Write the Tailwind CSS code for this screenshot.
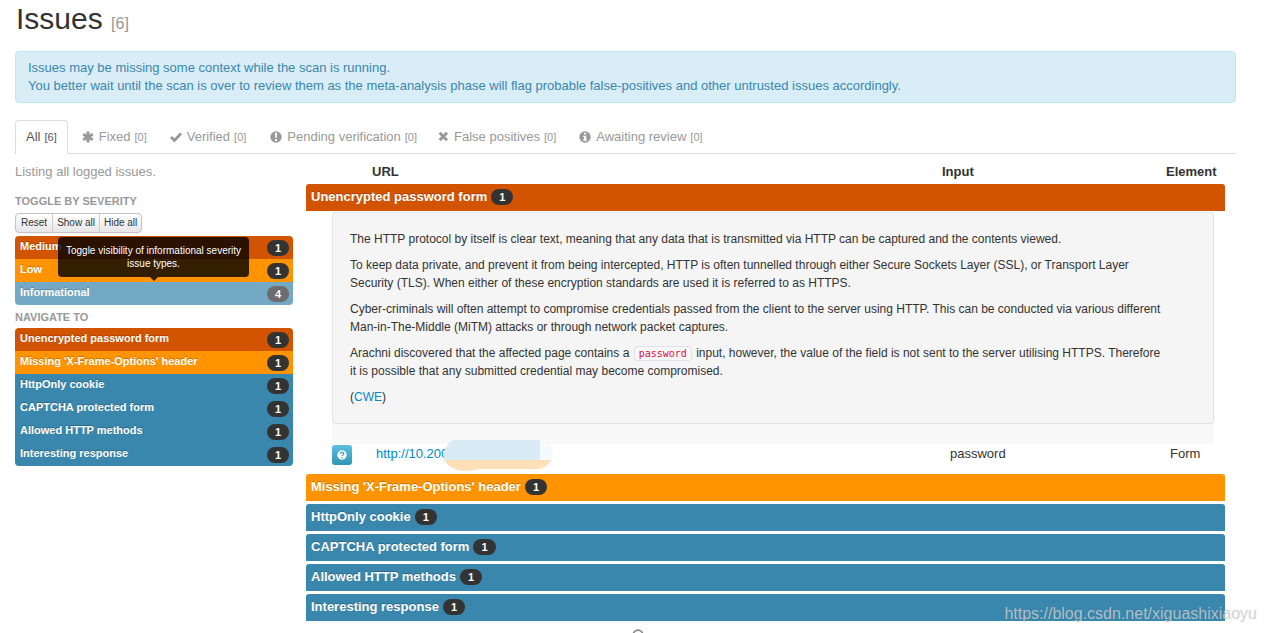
<!DOCTYPE html>
<html lang="en">
<head>
<meta charset="utf-8">
<title>Issues</title>
<script src="https://cdn.jsdelivr.net/npm/@tailwindcss/browser@4"></script>
</head>
<body class="relative h-screen overflow-hidden bg-white font-['Liberation_Sans',Arial,sans-serif] text-[13px] leading-[18px] text-[#333333]">
<main class="pl-[15px] pr-[29px]">
  <h1 class="pl-px pt-px text-[30px] leading-[36px] text-[#333333]">Issues <small class="text-base text-[#999999]">[6]</small></h1>

  <div role="alert" class="mt-[14px] rounded border border-[#bce8f1] bg-[#d9edf7] px-3 py-[7px] text-[#3a87ad]">
    Issues may be missing some context while the scan is running.<br>
    You better wait until the scan is over to review them as the meta-analysis phase will flag probable false-positives and other untrusted issues accordingly.
  </div>

  <nav class="mt-[17px] flex h-[34px] border-b border-[#dddddd] text-[#999999]">
    <a href="#all" class="-mb-px flex items-center gap-1 rounded-t border border-b-0 border-[#dddddd] bg-white px-[10px] pb-px text-[#555555]">All <small class="text-[11px]">[6]</small></a>
    <a href="#fixed" class="ml-[14px] flex items-center gap-1"><svg class="mr-px size-3" viewBox="0 0 12 12" stroke="currentColor" stroke-width="3"><path d="M6 0.5v11M1.2 3.2l9.6 5.6M1.2 8.8l9.6-5.6"/></svg>Fixed <small class="text-[11px]">[0]</small></a>
    <a href="#verified" class="ml-[23px] flex items-center gap-1"><svg class="mr-px size-3" viewBox="0 0 12 12" fill="none" stroke="currentColor" stroke-width="2.8"><path d="M1 6l3.4 3.4L11 2.4"/></svg>Verified <small class="text-[11px]">[0]</small></a>
    <a href="#pending" class="ml-[24px] flex items-center gap-1"><svg class="mr-px size-3" viewBox="0 0 12 12"><circle cx="6" cy="6" r="5.7" fill="currentColor"/><path d="M4.9 1.8h2.2l-.3 5h-1.6zM5 7.9h2v2H5z" fill="#fff"/></svg>Pending verification <small class="text-[11px]">[0]</small></a>
    <a href="#false" class="ml-[21px] flex items-center gap-1"><svg class="mr-px size-[11px]" viewBox="0 0 11 11" stroke="currentColor" stroke-width="3"><path d="M1.6 1.8l7.4 7.4M9 1.8l-7.4 7.4"/></svg>False positives <small class="text-[11px]">[0]</small></a>
    <a href="#review" class="ml-[23px] flex items-center gap-1"><svg class="mr-px size-3" viewBox="0 0 12 12"><circle cx="6" cy="6" r="5.7" fill="currentColor"/><path d="M5 1.8h2.2v1.8H5zM4.2 4.7h3v3.6h.8v1.5H4.2V8.3H5V6.1h-.8z" fill="#fff"/></svg>Awaiting review <small class="text-[11px]">[0]</small></a>
  </nav>

  <div class="mt-[9px] flex gap-[13px]">
    <aside class="w-[278px] shrink-0">
      <p class="text-[#999999]">Listing all logged issues.</p>
      <h2 class="mt-[11px] text-[11px] leading-[18px] font-bold text-[#999999]">TOGGLE BY SEVERITY</h2>
      <div class="mt-[3px] inline-flex divide-x divide-[#cccccc] rounded border border-[#c4c4c4] bg-linear-to-b from-white to-[#e6e6e6] text-[10px] leading-[18px] shadow-xs">
        <button type="button" class="px-[5px]">Reset</button>
        <button type="button" class="px-[4px]">Show all</button>
        <button type="button" class="px-[4px]">Hide all</button>
      </div>
      <div class="relative mt-[3px]">
        <ul class="overflow-hidden rounded text-[11px] leading-[20px] font-bold text-white [text-shadow:0_-1px_0_rgb(0_0_0/0.25)]">
          <li><a href="#medium" class="flex h-[23px] justify-between bg-[#d35400] pl-[5px] pr-1">Medium <span class="mt-1 h-4 rounded-full bg-[#333333] px-2 leading-4">1</span></a></li>
          <li><a href="#low" class="flex h-[23px] justify-between bg-[#ff9400] pl-[5px] pr-1">Low <span class="mt-1 h-4 rounded-full bg-[#333333] px-2 leading-4">1</span></a></li>
          <li><a href="#informational" class="flex h-[23px] justify-between bg-[#74a9c6] pl-[5px] pr-1">Informational <span class="mt-1 h-4 rounded-full bg-[#6d6d6d] px-2 leading-4">4</span></a></li>
        </ul>
        <div role="tooltip" class="absolute left-[43px] top-px w-[191px] rounded bg-black/80 px-[7px] py-[7px] text-center text-[10px] leading-[13px] text-white">Toggle visibility of informational severity issue types.
          <span class="absolute left-1/2 top-full -ml-1 border-x-4 border-t-4 border-x-transparent border-t-black/80"></span>
        </div>
      </div>
      <h2 class="mt-[3px] text-[11px] leading-[18px] font-bold text-[#999999]">NAVIGATE TO</h2>
      <ul class="mt-[2px] overflow-hidden rounded text-[11px] leading-[20px] font-bold text-white [text-shadow:0_-1px_0_rgb(0_0_0/0.25)]">
        <li><a href="#i1" class="flex h-[23px] justify-between bg-[#d35400] pl-[5px] pr-1">Unencrypted password form <span class="mt-1 h-4 rounded-full bg-[#333333] px-2 leading-4">1</span></a></li>
        <li><a href="#i2" class="flex h-[23px] justify-between bg-[#ff9400] pl-[5px] pr-1">Missing 'X-Frame-Options' header <span class="mt-1 h-4 rounded-full bg-[#333333] px-2 leading-4">1</span></a></li>
        <li><a href="#i3" class="flex h-[23px] justify-between bg-[#3a87ad] pl-[5px] pr-1">HttpOnly cookie <span class="mt-1 h-4 rounded-full bg-[#333333] px-2 leading-4">1</span></a></li>
        <li><a href="#i4" class="flex h-[23px] justify-between bg-[#3a87ad] pl-[5px] pr-1">CAPTCHA protected form <span class="mt-1 h-4 rounded-full bg-[#333333] px-2 leading-4">1</span></a></li>
        <li><a href="#i5" class="flex h-[23px] justify-between bg-[#3a87ad] pl-[5px] pr-1">Allowed HTTP methods <span class="mt-1 h-4 rounded-full bg-[#333333] px-2 leading-4">1</span></a></li>
        <li><a href="#i6" class="flex h-[23px] justify-between bg-[#3a87ad] pl-[5px] pr-1">Interesting response <span class="mt-1 h-4 rounded-full bg-[#333333] px-2 leading-4">1</span></a></li>
      </ul>
    </aside>

    <section class="min-w-0 flex-1 pr-[11px]">
      <table class="w-full table-fixed text-left">
        <thead><tr class="h-[21px] align-top">
          <th class="p-0 pl-[66px]">URL</th><th class="w-[224px] p-0">Input</th><th class="w-[59px] p-0">Element</th>
        </tr></thead>
      </table>
      <h3 id="i1" class="flex h-[27px] gap-1 rounded-t-[3px] bg-[#d35400] pl-[5px] pt-1 font-bold text-white [text-shadow:0_-1px_0_rgb(0_0_0/0.25)]">Unencrypted password form <span class="mt-px h-4 rounded-full bg-[#333333] px-2 text-[11px] leading-4">1</span></h3>
      <div class="mr-[11px] ml-[26px]">
        <div class="mt-px flex flex-col gap-2 rounded-[3px] border border-[#e3e3e3] bg-[#f5f5f5] px-[17px] py-[17px] text-xs leading-[18px]">
          <p>The HTTP protocol by itself is clear text, meaning that any data that is transmitted via HTTP can be captured and the contents viewed.</p>
          <p>To keep data private, and prevent it from being intercepted, HTTP is often tunnelled through either Secure Sockets Layer (SSL), or Transport Layer<br>Security (TLS). When either of these encryption standards are used it is referred to as HTTPS.</p>
          <p>Cyber-criminals will often attempt to compromise credentials passed from the client to the server using HTTP. This can be conducted via various different<br>Man-in-The-Middle (MiTM) attacks or through network packet captures.</p>
          <p>Arachni discovered that the affected page contains a <code class="mx-px rounded-[3px] border border-[#e1e1e8] bg-[#f7f7f9] px-1 py-px font-['DejaVu_Sans_Mono',monospace] text-[10px] leading-3 text-[#dd1144]">password</code> input, however, the value of the field is not sent to the server utilising HTTPS. Therefore<br>it is possible that any submitted credential may become compromised.</p>
          <p>(<a href="#cwe" class="text-[#0088cc]">CWE</a>)</p>
        </div>
        <div class="h-5 bg-[#f9f9f9]"></div>
        <table class="w-full table-fixed">
          <tbody><tr class="h-[30px] align-top">
            <td class="w-[44px] p-0"><button type="button" aria-label="Help" class="mt-px flex h-5 w-5 items-center justify-center rounded-[3px] bg-linear-to-b from-[#5bc0de] to-[#2f96b4]"><svg class="size-[10px]" viewBox="0 0 10 10"><circle cx="5" cy="5" r="4.7" fill="#fff"/><path d="M3.3 3.8c.2-2.2 3.6-2 3.4 0C6.600 5 5.100 4.900 5.100 6.100M5.100 6.900v1.300" fill="none" stroke="#3fa5c3" stroke-width="1.300"/></svg></button></td>
            <td class="relative p-0 pt-px"><a href="#url" class="text-[#0088cc]">http://10.200</a>
              <svg class="absolute left-[68px] -top-1 h-8 w-[109px]" viewBox="0 0 109 32" aria-hidden="true"><path d="M9 0H96V20H0V13Q2 4 9 0z" fill="#d9ebf5"/><path d="M96 0h5q6 4 8 12l-2 8H96z" fill="#f5fafd"/><path d="M0 20H107Q104 27 94 29L36 29Q28 31 19 31Q5 29 0 20z" fill="#fddfb8"/></svg>
            </td>
            <td class="w-[220px] p-0 pt-px">password</td>
            <td class="w-[44px] p-0 pt-px">Form</td>
          </tr></tbody>
        </table>
      </div>
      <div class="flex flex-col gap-[3px] font-bold text-white [text-shadow:0_-1px_0_rgb(0_0_0/0.25)]">
        <h3 id="i2" class="flex h-[27px] gap-1 rounded-t-[3px] bg-[#ff9400] pl-[5px] pt-1">Missing 'X-Frame-Options' header <span class="mt-px h-4 rounded-full bg-[#333333] px-2 text-[11px] leading-4">1</span></h3>
        <h3 id="i3" class="flex h-[27px] gap-1 rounded-t-[3px] bg-[#3a87ad] pl-[5px] pt-1">HttpOnly cookie <span class="mt-px h-4 rounded-full bg-[#333333] px-2 text-[11px] leading-4">1</span></h3>
        <h3 id="i4" class="flex h-[27px] gap-1 rounded-t-[3px] bg-[#3a87ad] pl-[5px] pt-1">CAPTCHA protected form <span class="mt-px h-4 rounded-full bg-[#333333] px-2 text-[11px] leading-4">1</span></h3>
        <h3 id="i5" class="flex h-[27px] gap-1 rounded-t-[3px] bg-[#3a87ad] pl-[5px] pt-1">Allowed HTTP methods <span class="mt-px h-4 rounded-full bg-[#333333] px-2 text-[11px] leading-4">1</span></h3>
        <h3 id="i6" class="flex h-[27px] gap-1 rounded-t-[3px] bg-[#3a87ad] pl-[5px] pt-1">Interesting response <span class="mt-px h-4 rounded-full bg-[#333333] px-2 text-[11px] leading-4">1</span></h3>
      </div>
    </section>
  </div>
</main>
<footer class="mt-2 flex justify-center pl-[11px] text-[#888888]"><svg class="size-3" viewBox="0 0 12 12" fill="none" stroke="currentColor" stroke-width="1.800"><circle cx="6" cy="6" r="4.800"/></svg></footer>
<p class="absolute right-2 bottom-[9px] text-base leading-5 text-[#d5d5d5]/80 [text-shadow:0_0_1px_rgb(0_0_0/0.15)]">https://blog.csdn.net/xiguashixiaoyu</p>
</body>
</html>
